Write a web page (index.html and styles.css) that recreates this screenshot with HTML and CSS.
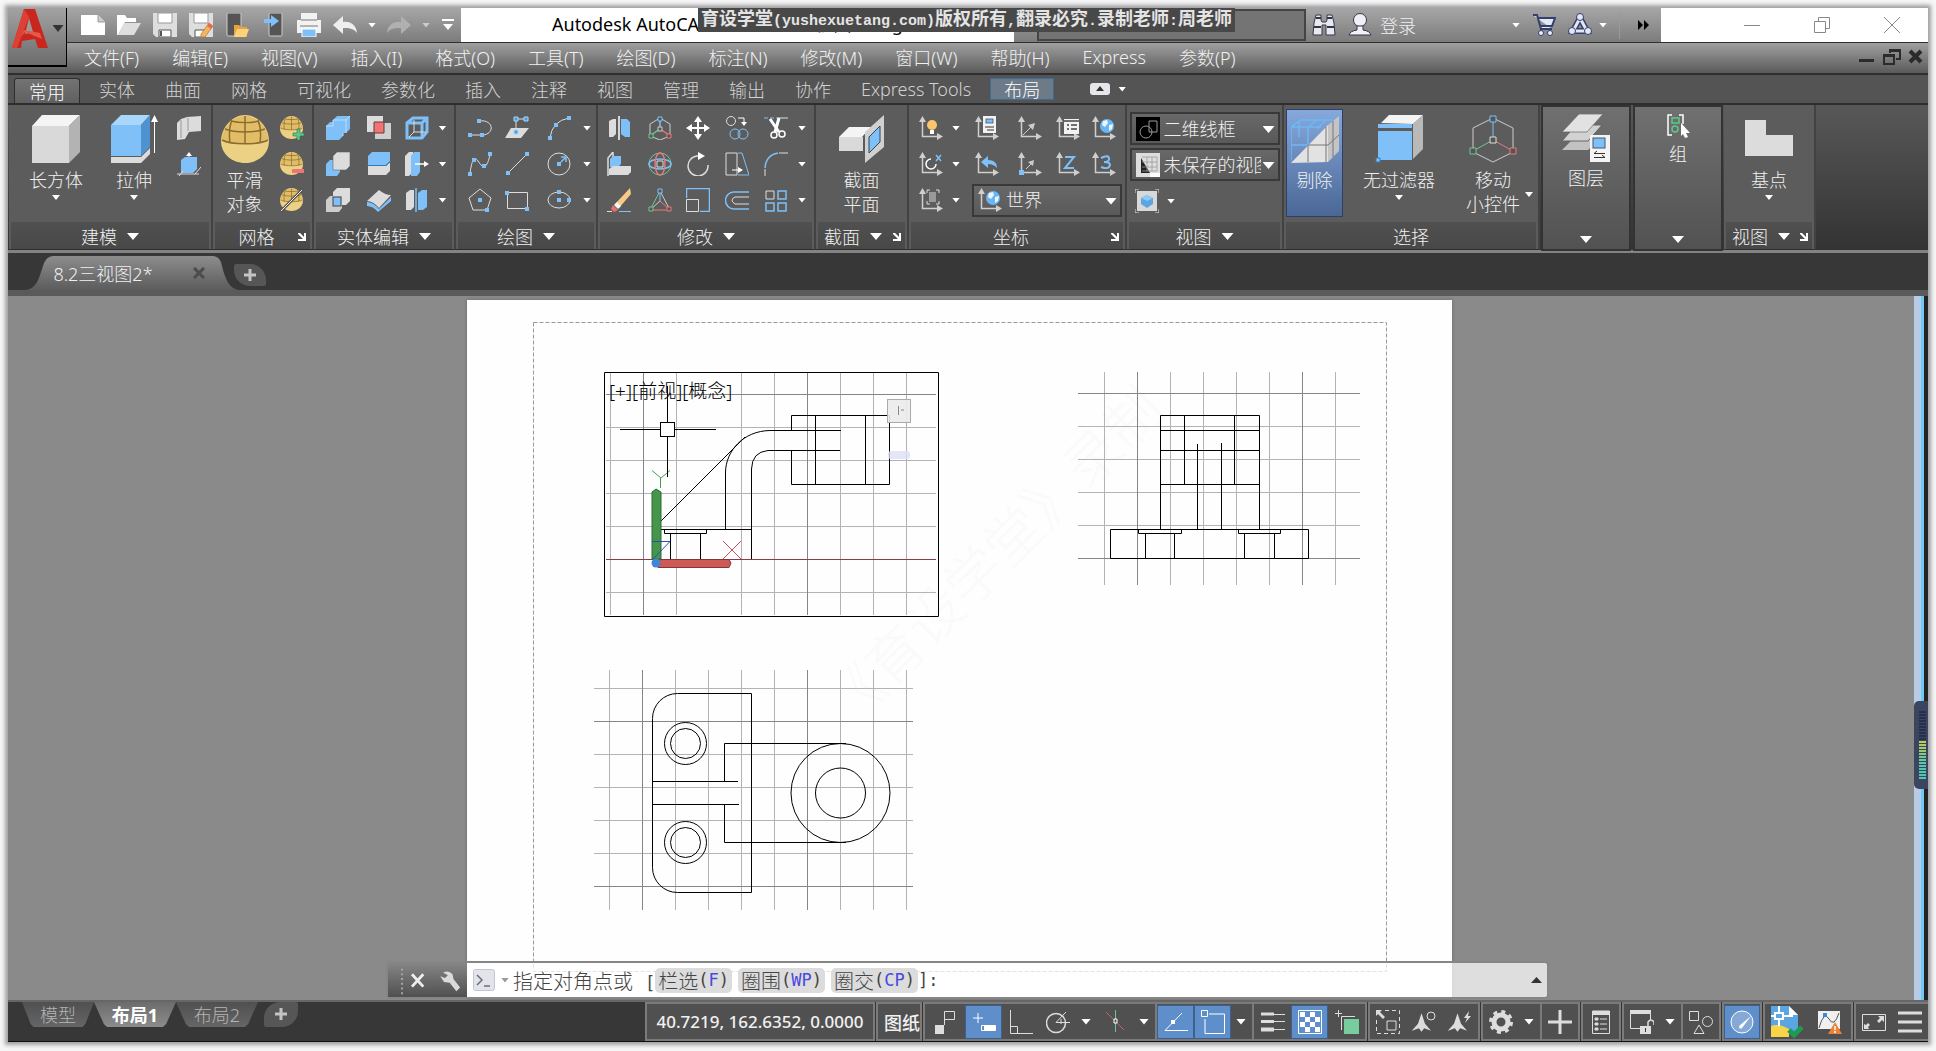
FILE: index.html
```html
<!DOCTYPE html>
<html lang="zh-CN">
<head>
    <meta charset="UTF-8">
    <meta name="viewport" content="width=device-width, initial-scale=1.0">
    <title>Autodesk AutoCAD 2020</title>
    <link rel="stylesheet" href="styles.css">
</head>
<body>
    <!-- 公用图标 -->
    <svg class="sprite" aria-hidden="true">
        <symbol id="ucs" viewBox="0 0 24 24"><path d="M3.500 5V20.500H19" fill="none" stroke="#cfcfcf" stroke-width="1.500"/><path d="M3.500 0L0 6H7ZM24 20.500L18 17V24Z" fill="#cfcfcf"/></symbol>
        <symbol id="egg" viewBox="0 0 48 48"><path d="M24 0C37 0 48 13 48 26 48 39 37 48 24 48S0 39 0 26C0 13 11 0 24 0Z" fill="#ecd083"/><path d="M24 1C36 1 47 13 47 25 38 30 10 30 1 25 1 13 12 1 24 1Z" fill="#e2bd68"/><path d="M24 1V29M11 5C8 12 8 20 9 28M37 5C40 12 40 20 39 28M4 14C14 18 34 18 44 14M1 25C10 30 38 30 47 25M10 6C18 8 30 8 38 6" fill="none" stroke="#8a6c2d" stroke-width="1.500"/></symbol>
        <symbol id="globe" viewBox="0 0 14 14"><circle cx="7" cy="7" r="7" fill="#68b6f5"/><path d="M3 2L7 1 8 4 5 8 2 6ZM9 6L13 5 12 10 9 12Z" fill="#eef6fc"/></symbol>
        <symbol id="compass" viewBox="0 0 24 24"><path d="M12 2L16 14 23 22 15 19 12 23 9 19 1 22 8 14Z" fill="#dcdcdc"/></symbol>
    </svg>

    <div class="app">
        <header class="titlebar">
            <button class="app-menu" aria-label="应用程序菜单">
                <svg width="38" height="42" viewBox="0 0 38 42"><path d="M13 1H24L37 40H27L24 31 11 33 10 40H1Z" fill="#c9271e"/><path d="M18 10L22 24 14 26Z" fill="#9a9a9a"/><path d="M1 40L14 24 31 31 29 25 13 22 7 26Z" fill="#e9574a"/><path d="M13 1L1 40H6L18 9Z" fill="#dd4035"/></svg>
                <i class="tri dark"></i>
            </button>
            <div class="quick">
                <button aria-label="新建"><svg viewBox="0 0 24 24"><path d="M0 2H17L24 9V22H0Z" fill="#fff"/><path d="M17 2V9H24" fill="#ccc" stroke="#999"/></svg></button>
                <button aria-label="打开"><svg viewBox="0 0 24 24"><path d="M0 2H8L10 5H19V9H8L1 22H0Z" fill="#fff"/><path d="M7 10H24L17 22H1Z" fill="#dedede"/></svg></button>
                <button aria-label="保存"><svg viewBox="0 0 24 24"><path d="M0 0H24V24H3L0 21Z" fill="#dedede"/><path d="M5 0H19V10H5Z" fill="#fff" stroke="#999"/><path d="M6 17H18V24H6Z" fill="#fff" stroke="#555"/><path d="M8 18V23" stroke="#555" stroke-width="2"/></svg></button>
                <button aria-label="另存为"><svg viewBox="0 0 24 24"><path d="M0 0H24V24H3L0 21Z" fill="#dedede"/><path d="M5 0H19V10H5Z" fill="#fff" stroke="#999"/><path d="M6 17H16V24H6Z" fill="#fff" stroke="#555"/><path d="M20 10L24 13 16 24 12 24 12 21Z" fill="#f3b65c" stroke="#b8722a" stroke-width=".7"/><path d="M20 10L24 13 22 16 18 13Z" fill="#e46a5e"/></svg></button>
                <button aria-label="从移动设备打开"><svg viewBox="0 0 24 24"><rect x="2" width="14" height="23" rx="1" fill="#555" stroke="#ccc"/><path d="M9 12H14L16 14H22V24H9Z" fill="#e9a23d"/><path d="M12 16H24L21 24H9Z" fill="#ffd27a"/></svg></button>
                <button aria-label="保存到移动设备"><svg viewBox="0 0 24 24"><rect x="8" width="13" height="23" rx="1" fill="#555" stroke="#ccc"/><path d="M3 6H10V2L18 8 10 14V10H3Z" fill="#7fc0f8"/></svg></button>
                <button aria-label="打印"><svg viewBox="0 0 24 24"><path d="M4 0H20V7H24V20H0V7H4Z" fill="#f2f2f2"/><path d="M4 7H20M3 13H21" stroke="#777"/><rect x="5" y="16" width="14" height="8" fill="#7fc0f8" stroke="#fff"/></svg></button>
                <button aria-label="放弃"><svg viewBox="0 0 24 24"><path d="M10 3V9C18 8 23 12 24 20 20 15 16 15 10 15V21L0 12Z" fill="#eee"/></svg></button>
                <i class="tri"></i>
                <button aria-label="重做"><svg viewBox="0 0 24 24"><path d="M14 3V9C6 8 1 12 0 20 4 15 8 15 14 15V21L24 12Z" fill="#b0b0b0"/></svg></button>
                <i class="tri dim"></i>
                <button aria-label="自定义快速访问工具栏" class="narrow"><svg width="14" height="14" viewBox="0 0 14 14"><path d="M1 1H13V3H1ZM2 6H12L7 12Z" fill="#fff"/></svg></button>
            </div>
            <div class="doc-title">Autodesk AutoCAD 2020 &nbsp; 8.2三视图2.dwg</div>
            <div class="info">
                <input class="search" type="text" aria-label="搜索">
                <button aria-label="查找"><svg viewBox="0 0 24 24"><path d="M4 2H9V7L10 9H14L15 7V2H20L22 10 23 22H14V12H10V22H1L2 10Z" fill="#e8e8f0" stroke="#33364a"/><path d="M4 5H9M15 5H20M2 14H9M15 14H22" stroke="#33364a" stroke-width="2"/></svg></button>
                <button class="login"><svg viewBox="0 0 24 24"><circle cx="12" cy="7" r="6.500" fill="#f0f0f6" stroke="#33364a"/><path d="M1 22Q2 18 9 17V13H15V17Q22 18 23 22Z" fill="#f0f0f6" stroke="#33364a"/></svg>登录</button>
                <i class="tri push"></i>
                <button aria-label="商店"><svg viewBox="0 0 24 24"><path d="M1 2H5L9 16H20M6 5H23L20 13H8" fill="#e3e6f5" stroke="#34406c" stroke-width="2"/><circle cx="9" cy="20" r="2.500" fill="#eef" stroke="#34406c"/><circle cx="18" cy="20" r="2.500" fill="#eef" stroke="#34406c"/></svg></button>
                <button aria-label="A360"><svg viewBox="0 0 24 24"><path d="M12 5L5 18H19Z" fill="none" stroke="#34406c" stroke-width="6"/><path d="M12 5L5 18H19Z" fill="none" stroke="#e3e6f5" stroke-width="3"/><circle cx="12" cy="4" r="3.500" fill="#e3e6f5" stroke="#34406c"/><circle cx="4" cy="18" r="3.500" fill="#e3e6f5" stroke="#34406c"/><circle cx="20" cy="18" r="3.500" fill="#e3e6f5" stroke="#34406c"/></svg></button>
                <i class="tri"></i>
                <span class="more"><svg width="12" height="10" viewBox="0 0 12 10"><path d="M0 0L5 5 0 10ZM6 0L11 5 6 10Z"/></svg></span>
            </div>
            <div class="win-buttons">
                <button aria-label="最小化"><svg width="16" height="16" viewBox="0 0 16 16"><path d="M0 8.500H16" stroke="#888"/></svg></button>
                <button aria-label="还原"><svg width="16" height="16" viewBox="0 0 16 16"><path d="M.5 4.500H11.500V15.500H.5ZM4.500 4V.5H15.500V11.500H12" fill="none" stroke="#888"/></svg></button>
                <button aria-label="关闭"><svg width="16" height="16" viewBox="0 0 16 16"><path d="M0 0L16 16M16 0L0 16" stroke="#888"/></svg></button>
            </div>
            <div class="notice">育设学堂<span>(yushexuetang.com)</span>版权所有<span>,</span>翻录必究<span>.</span>录制老师<span>:</span>周老师</div>
        </header>

        <nav class="menubar">
            <button>文件(F)</button>
            <button>编辑(E)</button>
            <button>视图(V)</button>
            <button>插入(I)</button>
            <button>格式(O)</button>
            <button>工具(T)</button>
            <button>绘图(D)</button>
            <button>标注(N)</button>
            <button>修改(M)</button>
            <button>窗口(W)</button>
            <button>帮助(H)</button>
            <button>Express</button>
            <button>参数(P)</button>
            <div class="mdi">
                <svg width="64" height="16" viewBox="0 0 64 16"><path d="M0 10H15V13H0ZM24 5H36V16H24ZM26 8V14H34V8ZM30 0H42V11H37V9H40V3H32V4H30Z" fill="#2b2b2b" fill-rule="evenodd"/><path d="M51 2L62 13M62 2L51 13" stroke="#2b2b2b" stroke-width="4"/></svg>
            </div>
        </nav>

        <nav class="ribbon-tabs">
            <button class="active">常用</button>
            <button>实体</button>
            <button>曲面</button>
            <button>网格</button>
            <button>可视化</button>
            <button>参数化</button>
            <button>插入</button>
            <button>注释</button>
            <button>视图</button>
            <button>管理</button>
            <button>输出</button>
            <button>协作</button>
            <button>Express Tools</button>
            <button class="context">布局</button>
            <button class="collapse" aria-label="最小化功能区"><svg width="20" height="12" viewBox="0 0 20 12"><rect width="20" height="12" rx="3" fill="#e6e6ea"/><path d="M10 3L14 8H6Z" fill="#333"/></svg></button>
            <i class="tri"></i>
        </nav>

        <main class="ribbon">
            <section class="panel w-model">
                <div class="tools">
                    <button class="big"><svg viewBox="0 0 48 48"><path d="M0 11L10 0H48L37 11Z" fill="#f4f4f4"/><path d="M0 11H37V48H0Z" fill="#d9d9d9"/><path d="M37 11L48 0V37L37 48Z" fill="#b3b3b3"/></svg>长方体<i class="tri"></i></button>
                    <button class="big"><svg viewBox="0 0 48 48"><path d="M1 10L11 0H40L31 10Z" fill="#a9d6fb"/><path d="M1 10H31V41H1Z" fill="#7fc0f8"/><path d="M31 10L40 0V32L31 41Z" fill="#4e93d0"/><path d="M1 42H31L40 33V39L31 48H1Z" fill="#dcdcdc"/><path d="M44.500 38V4" stroke="#fff"/><path d="M44.500 0L48 7H41Z" fill="#fff"/></svg>拉伸<i class="tri"></i></button>
                    <div class="grid g1">
                        <button aria-label="多段体"><svg viewBox="0 0 24 24"><path d="M0 7L4 3 10 1 24 0V15L12 16 8 23 0 24Z" fill="#dcdcdc"/><path d="M4 4V22M11 2V15" stroke="#999"/></svg></button>
                        <button aria-label="按住并拖动"><svg viewBox="0 0 24 24"><path d="M4 8L8 5H20V17L16 21H4Z" fill="#7fc0f8"/><path d="M12 5V1M0 22H22M2 24L6 19M18 22L24 15" stroke="#ddd"/><path d="M12 0L15 4H9Z" fill="#fff"/></svg></button>
                    </div>
                </div>
                <h2>建模<i class="tri lg"></i></h2>
            </section>

            <section class="panel w-mesh">
                <div class="tools">
                    <button class="big slim"><svg viewBox="0 0 48 48"><use href="#egg"/></svg>平滑<br>对象</button>
                    <div class="grid g1">
                        <button aria-label="提高平滑度"><svg viewBox="0 0 24 24"><use href="#egg" width="23" height="23"/><path d="M17 13H20V17H24V20H20V24H17V20H13V17H17Z" fill="#5cc98b" stroke="#336b4a" stroke-width=".6"/></svg></button>
                        <button aria-label="降低平滑度"><svg viewBox="0 0 24 24"><use href="#egg" width="23" height="23"/><rect x="12" y="17" width="12" height="4" fill="#ef7474"/></svg></button>
                        <button aria-label="优化网格"><svg viewBox="0 0 24 24"><use href="#egg" width="23" height="23"/><path d="M1 23L22 2" stroke="#555" stroke-width="3"/><path d="M1 23L22 2" stroke="#eee"/></svg></button>
                    </div>
                </div>
                <h2>网格<i class="launch"></i></h2>
            </section>

            <section class="panel w-solid">
                <div class="tools">
                    <div class="grid g3">
                        <button aria-label="并集"><svg viewBox="0 0 24 24"><path d="M0 10L4 6H7V4L11 0H24V13L20 17H17V20L13 24H0Z" fill="#7fc0f8"/><path d="M0 10H7V4H20L24 0M20 4V17M17 17V20" fill="none" stroke="#b8defc"/></svg></button>
                        <button aria-label="差集"><svg viewBox="0 0 24 24"><path d="M0 0H16V16H0Z" fill="#dcdcdc"/><path d="M8 7H24V23H8Z" fill="#cfcfcf"/><path d="M7 6H17V17H7Z" fill="#ef7474" stroke="#6d3838"/></svg></button>
                        <button aria-label="提取边"><svg viewBox="0 0 24 24"><path d="M2 7L8 2H22V16L17 22H2ZM2 7H17V22M17 7L22 2" fill="none" stroke="#7fc0f8" stroke-width="3"/><path d="M9 4V16H21M9 16L4 21" fill="none" stroke="#ddd"/></svg></button>
                        <i class="tri"></i>
                        <button aria-label="减去"><svg viewBox="0 0 24 24"><path d="M0 12L4 8H14V20L11 24H0Z" fill="#7fc0f8"/><path d="M7 4L11 0H24V14L20 18H7Z" fill="#dcdcdc" stroke="#666" stroke-width=".6"/></svg></button>
                        <button aria-label="剖切"><svg viewBox="0 0 24 24"><path d="M1 4L5 0H23V9L19 13H1Z" fill="#7fc0f8"/><path d="M1 14H19L23 10V19L19 23H1Z" fill="#dcdcdc"/><path d="M0 13.500H19L24 9" fill="none" stroke="#357ab8"/></svg></button>
                        <button aria-label="拉伸面"><svg viewBox="0 0 24 24"><path d="M0 4L4 0H8V20L4 24H0Z" fill="#dcdcdc"/><path d="M6 4L9 0H15V20L12 24H6Z" fill="#7fc0f8"/><path d="M10 12H22" stroke="#fff" stroke-width="1.500"/><path d="M24 12L19 9V15Z" fill="#fff"/></svg></button>
                        <i class="tri"></i>
                        <button aria-label="交集"><svg viewBox="0 0 24 24"><path d="M7 4L11 0H24V13L20 17H7Z" fill="#dcdcdc"/><path d="M0 12L4 8H16V20L13 24H0Z" fill="#cdcdcd"/><rect x="7" y="9" width="8" height="9" fill="#7fc0f8" stroke="#444"/></svg></button>
                        <button aria-label="加厚"><svg viewBox="0 0 24 24"><path d="M0 13L12 2Q18 7 24 7L12 20Q6 13 0 13Z" fill="#dcdcdc"/><path d="M0 14Q6 14 12 21L24 9V13L11 24Q6 18 0 18Z" fill="#7fc0f8"/></svg></button>
                        <button aria-label="分割"><svg viewBox="0 0 24 24"><path d="M1 5L5 2H9V19L6 22H1Z" fill="#dcdcdc"/><path d="M13 5L17 2H22V19L18 22H13Z" fill="#7fc0f8"/><path d="M11 0V24" stroke="#7fc0f8" stroke-width="1.500"/></svg></button>
                        <i class="tri"></i>
                    </div>
                </div>
                <h2>实体编辑<i class="tri lg"></i></h2>
            </section>

            <section class="panel w-draw">
                <div class="tools">
                    <div class="grid g4">
                        <button aria-label="多段线"><svg viewBox="0 0 24 24"><path d="M2 19H14M11 5C26 3 27 18 15 19" fill="none" stroke="#ddd"/><path d="M0 17H4V21H0ZM12 17H16V21H12ZM9 3H13V7H9Z" fill="#7fc0f8"/></svg></button>
                        <button aria-label="平面"><svg viewBox="0 0 24 24"><path d="M0 22L6 12H24L16 22Z" fill="#dcdcdc"/><path d="M11 16V3H22" fill="none" stroke="#ddd"/><path d="M9 1H13V5H9ZM19 1H23V5H19ZM9 14H13V18H9Z" fill="#4c9be0" stroke="#a9d6fb"/></svg></button>
                        <button aria-label="圆弧"><svg viewBox="0 0 24 24"><path d="M3 22Q5 5 22 2" fill="none" stroke="#ddd"/><path d="M1 20H5V24H1ZM7 7H11V11H7ZM20 0H24V4H20Z" fill="#7fc0f8"/></svg></button>
                        <i class="tri"></i>
                        <button aria-label="样条曲线"><svg viewBox="0 0 24 24"><path d="M2 21C4 8 6 3 10 9S18 20 22 3" fill="none" stroke="#ddd"/><path d="M0 20H4V24H0ZM4 6H8V10H4ZM14 12H18V16H14ZM20 0H24V4H20Z" fill="#7fc0f8"/></svg></button>
                        <button aria-label="直线"><svg viewBox="0 0 24 24"><path d="M3 21L21 3" stroke="#ddd"/><path d="M1 19H5V23H1ZM20 0H24V4H20Z" fill="#7fc0f8"/></svg></button>
                        <button aria-label="圆"><svg viewBox="0 0 24 24"><circle cx="12" cy="12" r="11" fill="none" stroke="#ddd"/><path d="M10 10H14V14H10Z" fill="#7fc0f8"/><path d="M14 10L18 6M14 5H19V10" fill="none" stroke="#7fc0f8" stroke-width="1.500"/></svg></button>
                        <i class="tri"></i>
                        <button aria-label="多边形"><svg viewBox="0 0 24 24"><path d="M12 1L23 10 19 22H5L1 10Z" fill="none" stroke="#ddd"/><path d="M10 10H14V14H10ZM17 20H21V24H17Z" fill="#7fc0f8"/></svg></button>
                        <button aria-label="矩形"><svg viewBox="0 0 24 24"><path d="M2.500 4.500H22.500V20.500H2.500Z" fill="none" stroke="#ddd"/><path d="M0 3H4V7H0ZM20 19H24V23H20Z" fill="#7fc0f8"/></svg></button>
                        <button aria-label="椭圆"><svg viewBox="0 0 24 24"><ellipse cx="12" cy="12" rx="11" ry="8" fill="none" stroke="#ddd"/><path d="M10 10H14V14H10ZM10 2H14V6H10ZM20 10H24V14H20Z" fill="#7fc0f8"/></svg></button>
                        <i class="tri"></i>
                    </div>
                </div>
                <h2>绘图<i class="tri lg"></i></h2>
            </section>

            <section class="panel w-modify">
                <div class="tools">
                    <div class="grid g6">
                        <button aria-label="三维镜像"><svg viewBox="0 0 24 24"><path d="M2 5L6 3H9V18L6 21H2Z" fill="#dcdcdc"/><path d="M14 3H20L23 6V21H18L14 18Z" fill="#7fc0f8"/><path d="M12 0V24" stroke="#fff" stroke-width="1.500"/></svg></button>
                        <button aria-label="三维移动"><svg viewBox="0 0 24 24"><path d="M12 2L2 8V20L12 24 22 20V8Z" fill="none" stroke="#ccc"/><path d="M12 4V12" stroke="#7fc0f8" stroke-width="1.500"/><path d="M12 13L3 19" stroke="#6dc795" stroke-width="1.500"/><path d="M12 13L21 19" stroke="#e87878" stroke-width="1.500"/><path d="M10 1H14V5H10Z" fill="#555" stroke="#7fc0f8"/><path d="M1 18H5V22H1Z" fill="#555" stroke="#6dc795"/><path d="M19 18H23V22H19Z" fill="#555" stroke="#e87878"/><path d="M10 11H14V15H10Z" fill="#555" stroke="#ccc"/></svg></button>
                        <button aria-label="移动"><svg viewBox="0 0 24 24"><path d="M12 0L16 6H13V11H18V8L24 12 18 16V13H13V18H16L12 24 8 18H11V13H6V16L0 12 6 8V11H11V6H8Z" fill="#fff"/></svg></button>
                        <button aria-label="复制"><svg viewBox="0 0 24 24"><circle cx="6" cy="5" r="4.500" fill="none" stroke="#ddd"/><circle cx="10" cy="18" r="5" fill="none" stroke="#7fc0f8"/><circle cx="18" cy="18" r="5" fill="none" stroke="#7fc0f8"/><path d="M13 2H19V6" fill="none" stroke="#fff"/><path d="M16 6H22L19 10Z" fill="#fff"/></svg></button>
                        <button aria-label="修剪"><svg viewBox="0 0 24 24"><path d="M0 2H14" stroke="#7fc0f8" stroke-dasharray="4 2"/><path d="M14 2H24" stroke="#ddd"/><path d="M6 3L15 16M15 2L11 16" stroke="#fff" stroke-width="3"/><circle cx="10" cy="19" r="3" fill="none" stroke="#fff" stroke-width="1.500"/><circle cx="18" cy="18" r="3" fill="none" stroke="#fff" stroke-width="1.500"/></svg></button>
                        <i class="tri"></i>
                        <button aria-label="三维对齐"><svg viewBox="0 0 24 24"><path d="M1 24V6L6 0V5" fill="none" stroke="#ddd" stroke-width="1.500"/><path d="M3 7L6 4H14V12L11 15H3Z" fill="#7fc0f8"/><path d="M2 17L6 14H24V20L21 23H2Z" fill="#dcdcdc"/></svg></button>
                        <button aria-label="三维旋转"><svg viewBox="0 0 24 24"><circle cx="12" cy="12" r="11" fill="none" stroke="#6dc795"/><ellipse cx="12" cy="12" rx="11" ry="5" fill="none" stroke="#7fc0f8" stroke-width="1.500"/><ellipse cx="12" cy="12" rx="5" ry="11" fill="none" stroke="#e87878" stroke-width="1.500"/><path d="M9 9H15V15H9Z" fill="#555" stroke="#ddd"/></svg></button>
                        <button aria-label="旋转"><svg viewBox="0 0 24 24"><path d="M15 4H11A10 10 0 1 0 22 13" fill="none" stroke="#ddd" stroke-width="1.500"/><path d="M12 0L19 4 12 8Z" fill="#fff"/></svg></button>
                        <button aria-label="拉伸对象"><svg viewBox="0 0 24 24"><path d="M1 1H12V23H1Z" fill="none" stroke="#ddd"/><path d="M13 1H17L24 23H13" fill="none" stroke="#7fc0f8"/><path d="M7 18H15" stroke="#fff"/><path d="M18 18L13 15V21Z" fill="#fff"/></svg></button>
                        <button aria-label="圆角"><svg viewBox="0 0 24 24"><path d="M1 24V17M15 1H24" stroke="#ddd"/><path d="M1 16Q2 3 14 1" fill="none" stroke="#7fc0f8" stroke-width="1.500"/></svg></button>
                        <i class="tri"></i>
                        <button aria-label="删除"><svg viewBox="0 0 24 24"><path d="M23 0L24 6 12 20 8 16Z" fill="#f6cb85"/><path d="M10 14L14 18 11 21 7 17Z" fill="#f5f5f5"/><path d="M6 17L11 22 7 24 4 21Z" fill="#ef6b6b"/><path d="M0 23.500H5" stroke="#ddd"/><path d="M12 23.500H24" stroke="#7fc0f8"/></svg></button>
                        <button aria-label="三维缩放"><svg viewBox="0 0 24 24"><path d="M12 3L2 22" stroke="#6dc795"/><path d="M12 3L22 22M12 13L3 21" stroke="#ccc"/><path d="M3 22H21" stroke="#e87878"/><path d="M12 13L21 21" stroke="#e87878"/><path d="M12 3V13" stroke="#7fc0f8"/><path d="M10 1H14V5H10Z" fill="#555" stroke="#7fc0f8"/><path d="M1 19H5V23H1Z" fill="#555" stroke="#6dc795"/><path d="M19 19H23V23H19Z" fill="#555" stroke="#e87878"/></svg></button>
                        <button aria-label="缩放"><svg viewBox="0 0 24 24"><path d="M.5 10V.5H23.500V23.500H14" fill="none" stroke="#7fc0f8" stroke-width="1.500"/><path d="M.5 11.500H12.500V23.500H.5Z" fill="none" stroke="#ddd"/></svg></button>
                        <button aria-label="偏移"><svg viewBox="0 0 24 24"><path d="M24 4H9A8 8 0 0 0 9 21H24" fill="none" stroke="#7fc0f8" stroke-width="1.500"/><path d="M24 9H10Q4 12 10 16H24" fill="none" stroke="#ddd"/></svg></button>
                        <button aria-label="阵列"><svg viewBox="0 0 24 24" fill="none"><path d="M2 3H10V11H2Z" stroke="#ddd"/><path d="M14 3H22V11H14ZM2 15H10V23H2ZM14 15H22V23H14Z" stroke="#7fc0f8" stroke-width="1.500"/></svg></button>
                        <i class="tri"></i>
                    </div>
                </div>
                <h2>修改<i class="tri lg"></i></h2>
            </section>

            <section class="panel w-section">
                <div class="tools">
                    <button class="big slim"><svg viewBox="0 0 48 48"><path d="M1 22L11 12H33L24 22Z" fill="#f4f4f4"/><path d="M1 22H25V36H1Z" fill="#d9d9d9"/><path d="M27 17L46 0V32L27 48Z" fill="#d0d0d0"/><path d="M31 22L42 11V27L31 38Z" fill="#7fc0f8" stroke="#345" /></svg>截面<br>平面</button>
                </div>
                <h2>截面<i class="tri lg"></i><i class="launch"></i></h2>
            </section>

            <section class="panel w-ucs">
                <div class="tools">
                    <div class="ucs-layout">
                        <button aria-label="UCS 图标"><svg viewBox="0 0 24 24"><use href="#ucs"/><circle cx="13" cy="9" r="5" fill="#f9c66b"/><path d="M11 14H15V18H11Z" fill="#fff"/></svg></button>
                        <i class="tri"></i>
                        <button aria-label="命名 UCS"><svg viewBox="0 0 24 24"><use href="#ucs"/><rect x="8" width="13" height="17" fill="#f2f2f2"/><rect x="11" y="3" width="7" height="4" fill="#7fc0f8" stroke="#345" stroke-width=".7"/><path d="M10 11H19M12 14H19" stroke="#333"/></svg></button>
                        <button aria-label="三点 UCS"><svg viewBox="0 0 24 24"><use href="#ucs"/><path d="M5 19L14 10" stroke="#ccc"/><path d="M17 7L15 14 10 9Z" fill="#ccc"/></svg></button>
                        <button aria-label="UCS 设置"><svg viewBox="0 0 24 24"><use href="#ucs"/><path d="M8 3H23V18H8Z" fill="#f2f2f2"/><path d="M8 5H23M11 9H13M15 9H21M11 13H13M15 13H21" stroke="#444" stroke-width="1.500"/></svg></button>
                        <button aria-label="世界坐标"><svg viewBox="0 0 24 24"><use href="#ucs"/><use href="#globe" x="8" y="3" width="14" height="14"/></svg></button>

                        <button aria-label="绕 X 轴旋转"><svg viewBox="0 0 24 24"><use href="#ucs"/><path d="M12 7A5 5 0 1 0 17 12" fill="none" stroke="#fff" stroke-width="1.500"/><path d="M17 3L22 9M22 3L17 9" stroke="#7fc0f8" stroke-width="1.500"/></svg></button>
                        <i class="tri"></i>
                        <button aria-label="上一个 UCS"><svg viewBox="0 0 24 24"><use href="#ucs"/><path d="M13 4V8C19 8 22 11 22 16 19 13 17 12 13 12V16L6 10Z" fill="#7fc0f8"/></svg></button>
                        <button aria-label="原点"><svg viewBox="0 0 24 24"><use href="#ucs"/><path d="M8 17L13 12" stroke="#ccc"/><path d="M16 8L15 14 10 10Z" fill="#ccc"/><path d="M1 18H6V23H1Z" fill="#7fc0f8"/></svg></button>
                        <button aria-label="Z 轴矢量"><svg viewBox="0 0 24 24"><use href="#ucs"/><path d="M9 5H18L9 16H18" fill="none" stroke="#7fc0f8" stroke-width="2"/></svg></button>
                        <button aria-label="三点"><svg viewBox="0 0 24 24"><use href="#ucs"/><path d="M9 6Q17 2 17 7 17 10 12 10 18 10 18 13 17 18 9 15" fill="none" stroke="#7fc0f8" stroke-width="2"/></svg></button>

                        <button aria-label="视图 UCS"><svg viewBox="0 0 24 24"><use href="#ucs"/><path d="M10 4H17V14H10Z" fill="#999"/><path d="M8 5V2H11M17 2H20V5M20 13V16H17M11 16H8V13" fill="none" stroke="#ddd"/></svg></button>
                        <i class="tri"></i>
                        <label class="combo ucs-combo">
                            <svg width="24" height="24" viewBox="0 0 24 24"><use href="#ucs"/><use href="#globe" x="8" y="3" width="14" height="14"/></svg>
                            <select aria-label="UCS"><option>世界</option></select>
                        </label>
                    </div>
                </div>
                <h2>坐标<i class="launch"></i></h2>
            </section>

            <section class="panel w-view">
                <div class="tools column">
                    <label class="combo">
                        <svg width="24" height="24" viewBox="0 0 24 24"><rect width="24" height="24"/><circle cx="10" cy="15" r="6" fill="none" stroke="#999"/><path d="M13 4H21V15H13Z" fill="none" stroke="#999"/></svg>
                        <select aria-label="视觉样式"><option>二维线框</option></select>
                    </label>
                    <label class="combo">
                        <svg width="24" height="24" viewBox="0 0 24 24"><rect width="24" height="24" fill="#dedede"/><path d="M5 5V20H14ZM4 20H14" fill="#222"/><path d="M6 4H21V18H6M11 4V18M16 4V18M6 9H21M6 14H21" fill="none" stroke="#999" stroke-width=".8"/><path d="M14 20H24V24H14Z" fill="#fff"/></svg>
                        <select aria-label="视图"><option>未保存的视图</option></select>
                    </label>
                    <div class="single">
                        <button aria-label="视口配置"><svg viewBox="0 0 24 24"><rect x="2" y="2" width="20" height="20" fill="#d8d8d8"/><path d="M6 9L12 6 18 9V15L12 19 6 15Z" fill="#5ca5e0"/><path d="M6 9L12 6 18 9 12 12Z" fill="#8ccaf8"/><path d="M0 4V0H4M20 0H24V4M24 20V24H20M4 24H0V20" fill="none" stroke="#ddd"/></svg></button>
                        <i class="tri"></i>
                    </div>
                </div>
                <h2>视图<i class="tri lg"></i></h2>
            </section>

            <section class="panel w-select">
                <div class="tools">
                    <button class="big pressed"><svg viewBox="0 0 48 48"><path d="M0 48L37 10V47Z" fill="#e2e2e2"/><path d="M37 10L48 1V36L37 47Z" fill="#c4c4c4"/><path d="M0 12H30M0 12V46M0 30H17M17 12V30M0 12L10 5H42M8 6V22M17 12L26 5M34 6L26 14" fill="none" stroke="#6db9f7" stroke-width="1.500"/><path d="M17 30V47M17 30H37L48 20M35 12V47M42 6V42" fill="none" stroke="#777"/></svg>剔除</button>
                    <button class="big wide"><svg viewBox="0 0 48 48"><path d="M6 8L14 0H48L38 9Z" fill="#f4f4f4"/><path d="M38 9L48 0V34L38 44Z" fill="#b9b9b9"/><path d="M3 9H37V13H3ZM3 16H37V45H3Z" fill="#7fc0f8"/><path d="M1 43H5V47H1Z" fill="#7fc0f8" stroke="#357ab8"/></svg>无过滤器<i class="tri"></i></button>
                    <button class="big gizmo"><svg viewBox="0 0 48 48"><path d="M24 3L4 13V37L24 47 44 37V13Z" fill="none" stroke="#ccc"/><path d="M24 4V25" stroke="#7fc0f8"/><path d="M24 25L4 36" stroke="#6dc795"/><path d="M24 25L44 36" stroke="#e87878"/><path d="M21 1H27V7H21Z" fill="#555" stroke="#7fc0f8"/><path d="M1 33H7V39H1Z" fill="#555" stroke="#6dc795"/><path d="M41 33H47V39H41Z" fill="#555" stroke="#e87878"/><path d="M21 22H27V28H21Z" fill="#555" stroke="#ddd"/></svg>移动<br>小控件</button>
                    <i class="tri gizmo-tri"></i>
                </div>
                <h2>选择</h2>
            </section>

            <button class="folded">
                <svg width="48" height="48" viewBox="0 0 48 48"><path d="M0 36L14 22H40L26 36Z" fill="#c2c2c2"/><path d="M0 27L14 11H40L26 27Z" fill="#d2d2d2" stroke="#666"/><path d="M0 18L17 0H41L25 18Z" fill="#e2e2e2" stroke="#666" stroke-width=".7"/><rect x="28" y="21" width="20" height="27" fill="#f4f4f4"/><rect x="31" y="24" width="12" height="10" fill="#7fc0f8" stroke="#456" /><path d="M32 39.500H43M32 43.500H43M35 37L32 39.500M40 41L43 43.500" stroke="#333"/></svg>
                图层<i class="tri lg"></i>
            </button>
            <button class="folded">
                <svg width="24" height="24" viewBox="0 0 24 24"><path d="M6 1H2V21H6M13 1H17V10" fill="none" stroke="#fff" stroke-width="1.500"/><path d="M6 4H13V9H6Z" fill="none" stroke="#5cc98b" stroke-width="1.500"/><circle cx="9" cy="15" r="3" fill="none" stroke="#5cc98b" stroke-width="1.500"/><path d="M15 9L24 19H20L22 23 19 24 17 20 15 22Z" fill="#fff"/></svg>
                组<i class="tri lg"></i>
            </button>

            <section class="panel w-base">
                <div class="tools">
                    <button class="big"><svg viewBox="0 0 48 48"><path d="M0 5H21V20H48V41H0Z" fill="#dcdcdc"/></svg>基点<i class="tri"></i></button>
                </div>
                <h2>视图<i class="tri lg"></i><i class="launch"></i></h2>
            </section>
        </main>

        <div class="file-tabs">
            <button class="file-tab">
                <svg class="tab-shape" viewBox="0 0 214 34" preserveAspectRatio="none"><defs><linearGradient id="tabfill" x2="0" y2="1"><stop stop-color="#8d8d8d"/><stop offset="1" stop-color="#5c5c5c"/></linearGradient></defs><path d="M0 34C12 33 14 22 18 10Q21 0 28 0H188Q195 0 197 10C200 22 204 33 214 34Z" fill="url(#tabfill)"/></svg>
                <span>8.2三视图2*</span>
                <svg width="12" height="12" viewBox="0 0 12 12"><path d="M1 1L11 11M11 1L1 11" stroke="#4b4b4b" stroke-width="3"/></svg>
            </button>
            <button class="new-file" aria-label="新图形"><svg width="12" height="12" viewBox="0 0 12 12"><path d="M6 0V12M0 6H12" stroke="#c4c4c4" stroke-width="3"/></svg></button>
        </div>

        <div class="canvas">
            <div class="stage">
                <svg class="sheet" width="985" height="699" viewBox="467 301 985 699">
                    <rect class="dash" x="533.500" y="323.500" width="853" height="649"/>
                    <text class="ghost" transform="translate(850 730) rotate(-45)">《育设学堂》录制</text>

                    <!-- 前视 -->
                    <path class="grid-line" d="M610.500 374V616M643.500 374V616M676.500 374V616M741.500 374V616M774.500 374V616M807.500 374V616M840.500 374V616M873.500 374V616M906.500 374V616M606 395.500H936M606 428.500H936M606 461.500H936M606 494.500H936M606 527.500H936M606 593.500H936"/>
                    <path class="grid-line major" d="M643.500 374V616M807.500 374V616M606 395.500H936"/>
                    <path d="M606 560.500H936" stroke="#8e3a44" fill="none"/>
                    <path class="edge" d="M604.500 373.500H938.500V617.500H604.500Z"/>
                    <path class="edge" d="M791.500 431V416.500H889.500V485.500H791.500V452M815.500 416V485M865.500 416V485M841 431.500H770C743 432 726 452 725.500 473V530M840 451.500H768Q752 453 751.500 470V560M661 522L745 438M661 530.500H751.500M664.500 531V534.500H706.500V531M670.500 535V560M700.500 535V560"/>
                    <path d="M652 471.500L661 479 670 471.500M660.500 479V489" fill="none" stroke="#4a9a50"/>
                    <path d="M652 493L656 490 661 493V560H652Z" fill="#45964c" stroke="#2f6b35"/>
                    <path d="M652 542.500H670L653 560" fill="none" stroke="#2c4fae"/>
                    <path d="M723 542L741 560M741 542L723 560" stroke="#c0505c"/>
                    <path d="M660 560.500H729L731 564 729 568.500H658Z" fill="#cd5a55" stroke="#803636"/>
                    <circle cx="656" cy="564" r="4.500" fill="#3f86d6"/>
                    <path class="edge" d="M620 430.500H716M667.500 387V478"/>
                    <rect class="edge" x="660.500" y="423.500" width="14" height="14" fill="#fff"/>
                    <text x="609" y="399" class="vp-label">[+][前视][概念]</text>
                    <rect x="887.500" y="400.500" width="23" height="23" fill="#ebebeb" fill-opacity=".9" stroke="#aaa"/>
                    <path d="M898.500 407V416M901 411H904" stroke="#888"/>
                    <rect x="888" y="452" width="22" height="8" rx="3" fill="#dedef6" fill-opacity=".8"/>

                    <!-- 左视 -->
                    <path class="grid-line" d="M1104.500 373V586M1137.500 373V586M1170.500 373V586M1203.500 373V586M1236.500 373V586M1269.500 373V586M1302.500 373V586M1335.500 373V586M1078 394.500H1360M1078 427.500H1360M1078 460.500H1360M1078 493.500H1360M1078 526.500H1360M1078 559.500H1360"/>
                    <path class="grid-line major" d="M1137.500 373V586M1302.500 373V586M1078 394.500H1360M1078 559.500H1360"/>
                    <path class="edge" d="M1160.500 530V416.500H1259.500V530M1160 431.500H1259M1160 451.500H1259M1160 485.500H1259M1184.500 416V485M1234.500 416V485M1197.500 445V530M1221.500 444V530M1110.500 530.500H1308.500V559.500H1110.500ZM1138.500 531V534.500H1181.500V531M1145.500 535V559M1174.500 535V559M1238.500 531V534.500H1280.500V531M1244.500 535V559M1274.500 535V559"/>

                    <!-- 俯视 -->
                    <path class="grid-line" d="M609.500 671V911M642.500 671V911M675.500 671V911M708.500 671V911M741.500 671V911M774.500 671V911M807.500 671V911M840.500 671V911M873.500 671V911M906.500 671V911M594 689.500H913M594 722.500H913M594 755.500H913M594 788.500H913M594 821.500H913M594 854.500H913M594 887.500H913"/>
                    <path class="grid-line major" d="M642.500 671V911M807.500 671V911M594 722.500H913M594 887.500H913"/>
                    <path class="edge" d="M751.500 694.500H677.500A25 25 0 0 0 652.500 719.500V868.500A25 25 0 0 0 677.500 893.500H751.500ZM652 782.500H738M652 805.500H739M724.500 782V744.500H846M724.500 805V843.500H846"/>
                    <g class="edge">
                        <circle cx="685.500" cy="744.500" r="21"/><circle cx="685.500" cy="744.500" r="15"/>
                        <circle cx="685.500" cy="843.500" r="21"/><circle cx="685.500" cy="843.500" r="15"/>
                        <circle cx="840.500" cy="794" r="49.500"/><circle cx="840.500" cy="794" r="25"/>
                    </g>
                </svg>
            </div>
            <div class="side-edge"></div>
            <div class="meter"><i></i></div>
            <form class="command">
                <div class="command-grip">
                    <svg width="80" height="36" viewBox="0 0 80 36"><path d="M12.500 6V34" stroke="#aaa" stroke-width="2" stroke-dasharray="2 3"/><path d="M23 12L35 25M35 12L23 25" stroke="#eee" stroke-width="3"/><path d="M56 10Q62 7 66 12L67 17 74 26 70 30 63 21 57 20 53 14 58 16 61 13Z" fill="#dadada"/></svg>
                </div>
                <svg width="22" height="22" viewBox="0 0 22 22"><rect x=".5" y=".5" width="21" height="21" rx="2" fill="#e2e4ea" stroke="#c3c6d0"/><path d="M4 6L9 11 4 16M11 17H17" fill="none" stroke="#6a6f80" stroke-width="1.500"/></svg>
                <i class="tri gray"></i>
                <label for="cmd">指定对角点或<b>[</b></label>
                <button type="button">栏选<b>(<em>F</em>)</b></button>
                <button type="button">圈围<b>(<em>WP</em>)</b></button>
                <button type="button">圈交<b>(<em>CP</em>)</b></button>
                <b class="end">]:</b>
                <input id="cmd" type="text">
                <i class="tri up"></i>
            </form>
        </div>

        <footer class="bottom">
            <div class="layout-tabs">
                <button class="model">模型</button>
                <button class="active">布局1</button>
                <button>布局2</button>
                <button class="add" aria-label="新建布局"><svg width="12" height="12" viewBox="0 0 12 12"><path d="M6 0V12M0 6H12" stroke="#c4c4c4" stroke-width="3"/></svg></button>
            </div>
            <div class="status">
                <div class="group coords">40.7219, 162.6352, 0.0000</div>
                <div class="group paper">图纸</div>
                <div class="group modes">
                    <button aria-label="捕捉" class="first"><svg viewBox="0 0 24 24"><path d="M2 15H11V24H2Z" fill="#ddd"/><path d="M11.500 15V1.500H21.500V9.500H12" fill="none" stroke="#ddd"/></svg></button>
                    <button aria-label="动态输入" class="on"><svg viewBox="0 0 24 24"><path d="M6 3V13M1 8H11" stroke="#fff"/><path d="M9.500 15.500H23.500V20.500H9.500Z" fill="none" stroke="#fff"/><path d="M12 16H23V20H12Z" fill="#fff"/></svg></button>
                    <button aria-label="正交"><svg viewBox="0 0 24 24"><path d="M1.500 0V23.500H24M1 16.500H8.500V23" fill="none" stroke="#ddd"/></svg></button>
                    <button aria-label="极轴"><svg viewBox="0 0 24 24"><circle cx="10" cy="13" r="9.500" fill="none" stroke="#ddd" stroke-width="1.500"/><path d="M24 12.500H10L20 2" fill="none" stroke="#ddd"/><path d="M15 9V14" stroke="#ddd"/></svg></button>
                    <i class="tri"></i>
                    <button aria-label="等轴测"><svg viewBox="0 0 24 24"><path d="M2 2L20 20" stroke="#c06474"/><path d="M11.500 0V22" stroke="#6dc795"/><path d="M10 9H13V13H10Z" fill="#555" stroke="#fff"/></svg></button>
                    <i class="tri"></i>
                    <span class="sep"></span>
                    <button aria-label="对象追踪" class="on"><svg viewBox="0 0 24 24"><path d="M24 20.500H1L18 3" fill="none" stroke="#fff"/><path d="M7 10H11V14H7Z" fill="#fff"/></svg></button>
                    <button aria-label="对象捕捉" class="on"><svg viewBox="0 0 24 24"><path d="M8 4H23.500V23.500H4V9M.5.5H6.500V6.500H.5Z" fill="none" stroke="#fff"/></svg></button>
                    <i class="tri"></i>
                    <span class="sep"></span>
                    <button aria-label="线宽"><svg viewBox="0 0 24 24"><path d="M0 4.500H24M0 11.500H24M0 19.500H24" stroke="#ddd"/><path d="M0 4H13M0 11.500H13" stroke="#ddd" stroke-width="3"/><path d="M0 19.500H13" stroke="#ddd" stroke-width="4"/></svg></button>
                    <button aria-label="透明度" class="on"><svg viewBox="0 0 24 24"><path d="M.5.5H23.500V23.500H.5Z" fill="none" stroke="#fff"/><path d="M2 2H7V7H2ZM12 2H17V7H12ZM7 7H12V12H7ZM17 7H22V12H17ZM2 12H7V17H2ZM12 12H17V17H12ZM7 17H12V22H7ZM17 17H22V22H17Z" fill="#fff"/></svg></button>
                    <button aria-label="选择循环"><svg viewBox="0 0 24 24"><path d="M3.500 0V7M0 3.500H7M6.500 20V6.500H20" fill="none" stroke="#ddd"/><path d="M9 9H24V24H9Z" fill="#78cd9f"/></svg></button>
                </div>
                <div class="group">
                    <button aria-label="注释可见性"><svg viewBox="0 0 24 24"><path d="M9 .5H23.500V23.500H.5V9" fill="none" stroke="#ddd" stroke-dasharray="4 3"/><path d="M11 11H20V20H11Z" fill="none" stroke="#ddd"/><path d="M0 0H6L4 2 9 7 7 9 2 4 0 6Z" fill="#ddd"/></svg></button>
                    <button aria-label="自动缩放"><svg viewBox="0 0 24 24"><use href="#compass" width="21" height="24" x="-1"/><circle cx="19" cy="6" r="4" fill="none" stroke="#ddd"/></svg></button>
                    <button aria-label="注释比例"><svg viewBox="0 0 24 24"><use href="#compass" width="21" height="24" x="-1"/><path d="M21 1L16 8H19L17 13 23 6H20Z" fill="#ddd"/></svg></button>
                </div>
                <div class="group">
                    <button aria-label="切换工作空间"><svg viewBox="0 0 24 24"><circle cx="12" cy="12" r="7" fill="none" stroke="#ddd" stroke-width="5"/><circle cx="12" cy="12" r="10.500" fill="none" stroke="#ddd" stroke-width="3" stroke-dasharray="4 4.250"/></svg></button>
                    <i class="tri"></i>
                    <span class="sep"></span>
                    <button aria-label="注释监视器"><svg viewBox="0 0 24 24"><path d="M12 0V24M0 12H24" stroke="#ddd" stroke-width="3"/></svg></button>
                </div>
                <div class="group">
                    <button aria-label="快捷特性"><svg viewBox="0 0 24 24"><path d="M3.500 1V23.500H20.500V1Z" fill="none" stroke="#ddd"/><path d="M3 1H21V5H3Z" fill="#ddd"/><path d="M6 8H9V10H6ZM6 13H9V15H6ZM6 18H9V20H6ZM11 9H18M11 14H18M11 19H18" fill="#ddd" stroke="#ddd"/></svg></button>
                </div>
                <div class="group">
                    <button aria-label="锁定界面"><svg viewBox="0 0 24 24"><path d="M10 18.500H.5V.5H20.500V10" fill="none" stroke="#ddd"/><path d="M0 0H21V4H0ZM10 16H21V24H10Z" fill="#ddd"/><path d="M18 16V12Q21 8 24 12V15" fill="none" stroke="#ddd" stroke-width="1.500"/><path d="M15.500 18V22" stroke="#333"/></svg></button>
                    <i class="tri"></i>
                    <span class="sep"></span>
                    <button aria-label="隔离对象"><svg viewBox="0 0 24 24" fill="none" stroke="#ddd"><path d="M.5 1.500H9.500V10.500H.5ZM10 15L15 23.500H5Z"/><circle cx="18.500" cy="11.500" r="5"/></svg></button>
                </div>
                <div class="group">
                    <button aria-label="硬件加速" class="on"><svg viewBox="0 0 24 24"><circle cx="12" cy="12" r="11" fill="#86a8d6" stroke="#fff"/><path d="M21 6L12 18Q9 20 9 16Z" fill="#fff"/></svg></button>
                </div>
                <div class="group roomy">
                    <button aria-label="受信任的图形"><svg class="xl" viewBox="0 0 32 32"><path d="M0 0H18L27 9V28H0Z" fill="#5aa5e2"/><path d="M18 0V9H27Z" fill="#fff"/><path d="M0 20Q8 17 18 23V31H0Z" fill="#f8d548"/><path d="M4 7H12V13H4ZM8 0V7M8 13V20M0 10H4M12 10H22" fill="none" stroke="#fff" stroke-width="2"/><path d="M18 24L23 29 31 21" fill="none" stroke="#1e9a55" stroke-width="5"/></svg></button>
                    <button aria-label="外部参照警告"><svg viewBox="0 0 24 24"><rect y="1" width="22" height="18" fill="#f0f0f0"/><path d="M1 18Q6 0 11 9T21 3" fill="none" stroke="#555"/><path d="M5 3H9V7H5Z" fill="#3d8bd8"/><path d="M17 12L24 24H10Z" fill="#e98235"/><path d="M17 16V20M17 21V23" stroke="#fff" stroke-width="1.500"/></svg></button>
                </div>
                <div class="group">
                    <button aria-label="全屏显示"><svg viewBox="0 0 24 24"><path d="M.5 4.500H23.500V20.500H.5Z" fill="none" stroke="#ddd"/><path d="M22 6V12L20 10 17 13 15 11 18 8 16 6ZM2 19V14L4 15 6 13 8 15 6 17 7 19Z" fill="#ddd"/></svg></button>
                    <button aria-label="自定义"><svg viewBox="0 0 24 24"><path d="M0 3H24M0 12H24M0 21H24" stroke="#ddd" stroke-width="3"/></svg></button>
                </div>
            </div>
        </footer>
    </div>
</body>
</html>
```
FILE: styles.css
```css
:root {
    --text: #f0f0f0;
    --panel: #5c5c5c;
    --dark: #373737;
    --line: #2e2e2e;
    --blue: #5f8fca;
}

* {
    box-sizing: border-box;
}

body {
    margin: 0;
    height: 100vh;
    padding: 8px 8px 9px;
    background: #f6f6f6;
    font-family: "Noto Sans", "Noto Sans CJK SC", sans-serif;
    font-size: 18px;
    font-weight: 300;
    color: var(--text);
    overflow: hidden;
}

button, input, select {
    font: inherit;
    color: inherit;
    background: none;
    border: 0;
    padding: 0;
    margin: 0;
}

button {
    display: flex;
    align-items: center;
    justify-content: center;
    white-space: nowrap;
    flex: none;
}

svg {
    flex: none;
    display: block;
}

.sprite {
    position: absolute;
    width: 0;
    height: 0;
}

.app {
    height: 100%;
    display: flex;
    flex-direction: column;
    box-shadow: 0 0 4px 3px #a0a0a4;
    background: var(--dark);
}

/* 小三角 */
.tri {
    flex: none;
    width: 8px;
    height: 5px;
    background: #fff;
    clip-path: polygon(0 0, 100% 0, 50% 100%);
}

.tri.lg {
    width: 12px;
    height: 7px;
}

.tri.dim {
    background: #ccc;
}

.tri.dark {
    background: #333;
    width: 11px;
    height: 7px;
}

.tri.gray {
    background: #999;
}

.tri.up {
    width: 11px;
    height: 6px;
    background: #333;
    clip-path: polygon(50% 0, 100% 100%, 0 100%);
}

.launch {
    width: 8px;
    height: 8px;
    border: solid #fff;
    border-width: 0 2px 2px 0;
}

.launch::before {
    content: "";
    display: block;
    width: 8px;
    height: 8px;
    background: #fff;
    clip-path: polygon(0 0, 20% 0, 100% 80%, 100% 100%, 80% 100%, 0 20%);
}

/* 标题栏 */
.titlebar {
    position: relative;
    display: flex;
    height: 35px;
    background: linear-gradient(#a6a6a6, #7c7c7c);
    border-bottom: 1px solid var(--line);
}

.app-menu {
    align-self: flex-start;
    width: 59px;
    height: 59px;
    background: linear-gradient(#a2a2a2, #6c6c6c);
    border: solid #000;
    border-width: 0 1px 2px 0;
    position: relative;
    z-index: 2;
    padding-bottom: 16px;
    gap: 4px;
}

.quick {
    display: flex;
    align-items: center;
    width: 394px;
    padding-left: 14px;
    gap: 12px;
}

.quick button svg,
.info button svg {
    width: 24px;
    height: 24px;
}

.quick .tri {
    margin: 0 -1px;
}

.quick .narrow svg {
    width: 14px;
    height: 14px;
}

.doc-title {
    flex: none;
    width: 553px;
    padding-left: 91px;
    background: #fff;
    color: #000;
    line-height: 32px;
    font-weight: 400;
    white-space: pre;
    overflow: hidden;
}

.info {
    flex: 1;
    display: flex;
    align-items: center;
    gap: 12px;
    padding: 0 11px 0 23px;
}

.search {
    width: 269px;
    height: 32px;
    background: #747474;
    border: 2px solid #444;
    margin-right: -6px;
}

.login {
    gap: 8px;
}

.info button + .tri {
    margin-left: -5px;
}

.info .login + .push {
    margin-left: auto;
}

.more {
    border-left: 1px solid #999;
    padding: 9px 0 9px 18px;
}

.win-buttons {
    width: 267px;
    display: flex;
    align-items: center;
    justify-content: flex-end;
    padding-right: 28px;
    gap: 54px;
    background: #fff;
}

.notice {
    position: absolute;
    left: 690px;
    top: 0;
    height: 24px;
    padding: 0 3px;
    line-height: 21px;
    font-weight: 700;
    color: #e4e4e4;
    background: #484848;
    white-space: nowrap;
}

.notice span {
    font-family: "Liberation Mono", monospace;
    font-size: 15px;
}

/* 菜单 */
.menubar {
    display: flex;
    align-items: center;
    height: 32px;
    padding: 0 5px 2px 76px;
    gap: 33px;
    background: linear-gradient(#a0a0a0, #5a5a5a);
    border-bottom: 2px solid var(--line);
}

.mdi {
    margin-left: auto;
}

.ribbon-tabs {
    display: flex;
    align-items: center;
    height: 30px;
    padding-left: 6px;
    background: #545454;
    border-bottom: 2px solid var(--line);
    color: #d2d2d2;
}

.ribbon-tabs button {
    height: 25px;
    padding: 0 15px;
}

.ribbon-tabs .active {
    align-self: flex-end;
    padding: 0 14px;
    margin-right: 4px;
    color: #fff;
    background: linear-gradient(#737373, #606060);
    border: 1px solid var(--line);
    border-bottom: 0;
    border-radius: 3px 3px 0 0;
}

.ribbon-tabs .context {
    height: 22px;
    padding: 0 13px;
    margin-left: 4px;
    color: #fff;
    background: #6d7a87;
    border: 1px solid #3e6a98;
}

.ribbon-tabs .collapse {
    padding: 0;
    margin: 0 8px 0 36px;
}

/* 功能区 */
.ribbon {
    display: flex;
    height: 148px;
    padding-left: 1px;
    background: linear-gradient(#585858, #333);
    border-bottom: 3px solid #838383;
}

.panel {
    flex: none;
    display: flex;
    flex-direction: column;
    background: var(--panel);
    border-right: 2px solid #424242;
    border-bottom: 1px solid var(--line);
}

.w-model { width: 204px; }
.w-mesh { width: 101px; }
.w-solid { width: 142px; }
.w-draw { width: 142px; }
.w-modify { width: 218px; }
.w-section { width: 93px; }
.w-ucs { width: 218px; }
.w-view { width: 157px; }
.w-select { width: 256px; }
.w-base { width: 92px; }

.panel h2 {
    flex: none;
    display: flex;
    align-items: center;
    justify-content: center;
    gap: 10px;
    height: 27px;
    margin: 0 2px;
    padding-top: 2px;
    background: linear-gradient(#505050, #484848);
    font-size: 18px;
    font-weight: 300;
    line-height: 24px;
    white-space: nowrap;
}

.panel h2 .launch {
    margin-left: auto;
    margin-right: 4px;
}

.w-mesh h2::before, .w-ucs h2::before {
    content: "";
    margin-left: auto;
}

.w-section h2, .w-base h2 {
    padding-left: 6px;
}

.tools {
    flex: 1;
    display: flex;
    justify-content: center;
    align-items: flex-start;
}

.w-model .tools {
    padding-left: 2px;
}

.w-mesh .tools {
    padding-right: 4px;
}

.big {
    flex-direction: column;
    width: 78px;
    padding-top: 10px;
    line-height: 24px;
}

.big svg {
    width: 48px;
    height: 48px;
    margin-bottom: 5px;
}

.big .tri {
    margin-top: 3px;
}

.big.slim {
    width: 62px;
}

.big.wide {
    width: 112px;
}

.big.gizmo {
    width: 76px;
}

.gizmo-tri {
    margin: 87px 6px 0 -6px;
}

.big.pressed {
    width: 57px;
    height: 108px;
    margin: 4px auto 0 3px;
    padding: 5px 0 0;
    justify-content: flex-start;
    background: linear-gradient(#86a8dc, #4a6795);
    border: 1px solid #2f3f6a;
}

.grid {
    display: grid;
    grid-auto-rows: 36px;
    align-items: center;
    justify-items: center;
    padding-top: 5px;
}

.g1 { grid-template-columns: 32px; }
.g3 { grid-template-columns: 41px 40px 36px 16px; }
.g4 { grid-template-columns: 38px 36px 48px 8px; }
.g6 { grid-template-columns: 42px 40px 36px 42px 36px 16px; }

.w-modify .tools {
    padding-right: 4px;
}

.grid svg,
.ucs-layout button svg,
.single button svg {
    width: 24px;
    height: 24px;
}

.ucs-layout {
    display: grid;
    grid-template-columns: 34px 16px 46px 40px 36px 36px;
    grid-auto-rows: 36px;
    align-items: center;
    justify-items: center;
    padding: 5px 0 0 2px;
}

.ucs-combo {
    grid-column: span 4;
    justify-self: end;
}

.combo {
    position: relative;
    display: flex;
    align-items: center;
    width: 150px;
    height: 33px;
    padding-left: 4px;
    background: linear-gradient(#686868, #595959);
    border: 2px solid #393939;
    gap: 4px;
}

.combo select {
    appearance: none;
    flex: 1;
    min-width: 0;
    height: 28px;
    padding-right: 17px;
}

.combo::after {
    content: "";
    position: absolute;
    right: 3px;
    top: 12px;
    width: 12px;
    height: 7px;
    background: #fff;
    clip-path: polygon(0 0, 100% 0, 50% 100%);
}

.tools.column {
    flex-direction: column;
    justify-content: flex-start;
    align-items: center;
    padding-top: 7px;
    gap: 3px;
}

.single {
    align-self: flex-start;
    display: flex;
    align-items: center;
    height: 34px;
    gap: 8px;
    padding-left: 8px;
}

.folded {
    flex-direction: column;
    justify-content: flex-start;
    width: 88px;
    height: 144px;
    margin: 1px 2px;
    padding-top: 7px;
    background: linear-gradient(#707070, #525252);
    border: 1px solid #333;
    outline: 1px solid #333;
    line-height: 32px;
}

.folded .tri {
    margin: auto 0 6px;
}

/* 图形选项卡 */
.file-tabs {
    display: flex;
    align-items: flex-end;
    height: 43px;
    padding-left: 17px;
    border-bottom: 6px solid #5a5a5a;
}

.file-tab {
    position: relative;
    width: 214px;
    height: 34px;
    padding-right: 6px;
    gap: 40px;
}

.file-tab span,
.file-tab svg {
    position: relative;
}

.file-tab .tab-shape {
    position: absolute;
    left: 0;
    top: 0;
    width: 100%;
    height: 100%;
}

.new-file {
    width: 32px;
    height: 22px;
    margin: 0 0 4px -5px;
    background: #565656;
    border-radius: 2px 16px 2px 16px;
}

/* 绘图区 */
.canvas {
    flex: 1;
    min-height: 0;
    position: relative;
    display: flex;
    background: #8a8a8a;
}

.stage {
    flex: 1;
    overflow: hidden;
    display: flex;
    justify-content: center;
    padding: 4px 3px 0 0;
}

.sheet {
    background: #fefefe;
    box-shadow: 0 0 3px #666;
}

.dash {
    fill: none;
    stroke: #999;
    stroke-dasharray: 4 2;
}

.grid-line {
    fill: none;
    stroke: #b2b2b8;
}

.grid-line.major {
    stroke: #85858c;
}

.edge {
    fill: none;
    stroke: #000;
}

rect.edge {
    fill: #fff;
}

.vp-label {
    font-size: 19px;
    fill: #000;
}

.ghost {
    font-size: 56px;
    fill: #000;
    opacity: .01;
}

.side-edge {
    width: 14px;
    background: linear-gradient(90deg, #b8cce8 0 7px, #6fc8f5 7px 10px, #222 10px);
}

.meter {
    position: absolute;
    right: 0;
    top: 405px;
    width: 14px;
    height: 88px;
    padding: 10px 2px 10px 5px;
    background: #3c4560;
    border-radius: 5px 0 0 5px;
}

.meter i {
    display: block;
    height: 100%;
    background: repeating-linear-gradient(transparent 0 2px, #3c4560 2px 3px), linear-gradient(#27304a 42%, #c8cc50 43%, #4fc8b0 80%);
}

/* 命令行 */
.command {
    position: absolute;
    left: 378px;
    right: 379px;
    bottom: 1px;
    height: 38px;
    display: flex;
    align-items: center;
    gap: 6px;
    padding-right: 5px;
    background: rgba(255, 255, 255, .72);
    border: 2px solid #868686;
    border-radius: 4px;
    color: #444;
    font-size: 20px;
}

.command-grip {
    align-self: stretch;
    width: 79px;
    background: linear-gradient(#858585, #505050);
}

.command-grip svg {
    width: 80px;
    height: 34px;
}

.command .tri.gray {
    margin-right: -2px;
}

.command b {
    font-family: "DejaVu Sans Mono", monospace;
    font-size: 17px;
    font-weight: 400;
}

.command label b {
    margin-left: 12px;
}

.command em {
    font-style: normal;
    color: #4b48e0;
}

.command button {
    height: 25px;
    padding: 0 3px;
    background: #dcdcdc;
    border-radius: 5px;
}

.command label + button {
    margin-left: -6px;
}

.command .end {
    margin-left: -6px;
}

.command input {
    flex: 1;
    min-width: 0;
    outline: 0;
}

/* 底部 */
.bottom {
    flex: none;
    display: flex;
    height: 42px;
    border-top: 2px solid #666;
    border-bottom: 1px solid #111;
}

.layout-tabs {
    display: flex;
    padding-left: 14px;
}

.layout-tabs button {
    width: 82px;
    height: 25px;
    padding-bottom: 2px;
    background: linear-gradient(#505050, #666);
    color: #b4b4b4;
    clip-path: polygon(0 0, 100% 0, 88% 88%, 84% 100%, 16% 100%, 12% 88%);
}

.layout-tabs .model {
    width: 72px;
}

.layout-tabs .active {
    background: linear-gradient(#6c6c6c, #8c8c8c);
    color: #fff;
    font-weight: 700;
}

.layout-tabs .add {
    width: 34px;
    margin-left: 6px;
    background: #565656;
    clip-path: none;
    border-radius: 16px 2px 16px 2px;
}

.status {
    margin-left: auto;
    display: flex;
    gap: 1px;
}

.group {
    display: flex;
    align-items: center;
    background: #505050;
    border: 2px solid #7b7b7b;
}

.group:last-child {
    border-right: 0;
}

.group button {
    width: 36px;
    height: 34px;
}

.group button svg {
    width: 24px;
    height: 24px;
}

.group button svg.xl {
    width: 32px;
    height: 32px;
}

.group.modes button {
    width: 37px;
}

.group.modes .first {
    width: 40px;
}

.group .on {
    background: var(--blue);
    border: 1px solid #3f5f8c;
}

.group .tri {
    width: 10px;
    height: 6px;
    margin: 0 6px 0 5px;
}

.group .sep {
    width: 2px;
    align-self: stretch;
    background: #7b7b7b;
}

.coords {
    width: 230px;
    justify-content: center;
    font-size: 17px;
    font-weight: 500;
}

.paper {
    width: 46px;
    padding-left: 6px;
    font-weight: 500;
    white-space: nowrap;
    overflow: hidden;
}

.roomy button {
    width: 43px;
}
```
